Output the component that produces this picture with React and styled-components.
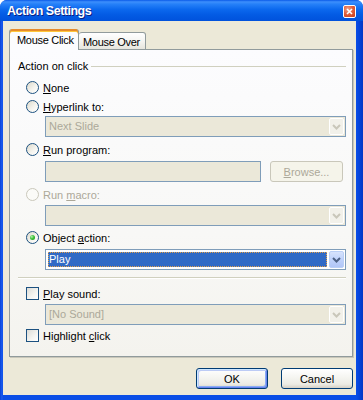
import React from "react";
import styled, { createGlobalStyle, css } from "styled-components";

const GlobalStyle = createGlobalStyle`
  html, body { margin: 0; padding: 0; background: #fff; }
  body { font-family: "Liberation Sans", Arial, sans-serif; font-size: 11px; }
`;

const font = `"Liberation Sans", Arial, sans-serif`;

const Window = styled.div`
  width: 363px;
  height: 400px;
  display: flex;
  flex-direction: column;
  background: linear-gradient(to right, #0842d6 0px, #1a5cf0 2px, #0a4ee6 3px, #0a4ee6 356px, #0648e0 358px, #0337c4 363px);
  border-radius: 7px 7px 0 0;
  overflow: hidden;
  font-family: ${font};
  font-size: 11px;
  color: #000;
`;

const TitleBar = styled.div`
  height: 21px;
  flex: none;
  display: flex;
  align-items: center;
  justify-content: space-between;
  padding: 1px 7px 0 7px;
  box-sizing: border-box;
  background: linear-gradient(to bottom, #0a5ae8 0%, #3d8ffc 9%, #2580f8 20%, #0b68ee 45%, #035be4 70%, #0052dc 100%);
`;

const Title = styled.span`
  color: #fff;
  font-weight: bold;
  font-size: 12.5px;
  letter-spacing: -0.5px;
  text-shadow: 1px 1px 0 #0a1e82;
`;

const CloseButton = styled.div`
  width: 11px;
  height: 11px;
  border: 1px solid #fff;
  border-radius: 2px;
  background: radial-gradient(circle at 35% 30%, #f0a48a 0%, #e2623f 45%, #c43a17 100%);
  display: flex;
  align-items: center;
  justify-content: center;
  margin-top: 1px;
`;

const Client = styled.div`
  flex: 1;
  margin: 0 7px 5px 3px;
  background: #ece9d8;
  padding: 8px 3px 0 6px;
  display: flex;
  flex-direction: column;
`;

const TabStrip = styled.div`
  display: flex;
  align-items: flex-end;
  height: 21px;
  margin-bottom: -1px;
  position: relative;
  z-index: 1;
`;

const Tab = styled.div`
  box-sizing: border-box;
  border: 1px solid #919b9c;
  border-radius: 3px 3px 0 0;
  display: flex;
  align-items: center;
  white-space: nowrap;
  letter-spacing: -0.3px;
  ${({ $active }) =>
    $active
      ? css`
          width: 70px;
          height: 21px;
          padding: 1px 0 0 7px;
          border-bottom: none;
          border-top: none;
          background: #fcfcfe;
          box-shadow: inset 0 2px 0 #e68b2c, inset 0 3px 0 #ffc73c;
        `
      : css`
          width: 67px;
          height: 18px;
          padding: 1px 0 0 4px;
          border-left: none;
          background: linear-gradient(to bottom, #ffffff 0%, #f5f5f2 50%, #e6e5dd 100%);
        `}
`;

const Panel = styled.div`
  height: 308px;
  box-sizing: border-box;
  border: 1px solid #919b9c;
  box-shadow: 1px 1px 0 #c9c7ba;
  background: linear-gradient(to bottom, #fcfcfe 0%, #f8f8f6 60%, #f4f3ee 100%);
  padding: 9px 6px 0 8px;
  display: flex;
  flex-direction: column;
`;

const GroupHeader = styled.div`
  display: flex;
  align-items: center;
  height: 13px;
  gap: 3px;
  &::after {
    content: "";
    flex: 1;
    height: 0;
    border-top: 1px solid #d0d0bf;
    margin-top: 1px;
  }
`;

const Option = styled.label`
  display: flex;
  align-items: center;
  height: 13px;
  gap: 4px;
  margin: ${({ $mt = 6 }) => `${$mt}px 0 0 8px`};
  color: ${({ $disabled }) => ($disabled ? "#aca899" : "#000")};
  white-space: nowrap;
`;

const Radio = styled.span`
  width: 13px;
  height: 13px;
  box-sizing: border-box;
  border-radius: 50%;
  flex: none;
  display: flex;
  align-items: center;
  justify-content: center;
  border: 1px solid ${({ $disabled }) => ($disabled ? "#cac8bb" : "#1c5180")};
  background: ${({ $disabled }) =>
    $disabled ? "#fbfbf8" : "linear-gradient(135deg, #dcd9cb 0%, #f6f5f0 60%, #ffffff 100%)"};
  &::after {
    content: "";
    display: ${({ $checked }) => ($checked ? "block" : "none")};
    width: 5px;
    height: 5px;
    border-radius: 50%;
    background: radial-gradient(circle at 35% 35%, #b8f0b0 0%, #3cc23a 45%, #1a8f1a 100%);
  }
`;

const Check = styled.span`
  width: 13px;
  height: 13px;
  box-sizing: border-box;
  flex: none;
  border: 1px solid #1c5180;
  background: linear-gradient(135deg, #dcdcd7 0%, #f5f5f1 60%, #ffffff 100%);
`;

const FieldRow = styled.div`
  display: flex;
  gap: 9px;
  margin: ${({ $mt = 4 }) => `${$mt}px 0 0 27px`};
`;

const SelectBox = styled.div`
  flex: 1;
  height: 21px;
  box-sizing: border-box;
  border: 1px solid #7f9db9;
  background: ${({ $active }) => ($active ? "#fff" : "#ebe8d9")};
  display: flex;
  align-items: center;
  padding: 0 1px 0 2px;
  color: #aca899;
`;

const SelectValue = styled.div`
  flex: 1;
  height: 15px;
  line-height: 15px;
  padding-left: 1px;
  box-sizing: border-box;
  ${({ $selected }) =>
    $selected &&
    css`
      background: #316ac5;
      color: #fff;
      outline: 1px dotted #e4a04a;
      outline-offset: -1px;
      margin-right: 2px;
    `}
`;

const DropButton = styled.div`
  width: 15px;
  height: 17px;
  box-sizing: border-box;
  border-radius: 2px;
  display: flex;
  align-items: center;
  justify-content: center;
  ${({ $active }) =>
    $active
      ? css`
          border: 1px solid #bacff6;
          background: linear-gradient(to bottom, #d7e3fc 0%, #c1d3fb 45%, #b1c6f7 100%);
          color: #4d6185;
        `
      : css`
          border: 1px solid #fff;
          background: #f2f1ea;
          color: #c9c7ba;
        `}
`;

const TextBox = styled.div`
  width: 216px;
  height: 21px;
  box-sizing: border-box;
  border: 1px solid #7f9db9;
  background: #ebe8d9;
`;

const SmallButton = styled.div`
  width: 73px;
  height: 21px;
  box-sizing: border-box;
  border: 1px solid #c9c7ba;
  border-radius: 3px;
  background: #f5f4ea;
  color: #aca899;
  display: flex;
  align-items: center;
  justify-content: center;
`;

const Separator = styled.div`
  margin-top: 7px;
  height: 0;
  border-top: 1px solid #d0d0bf;
  border-bottom: 1px solid #ffffff;
`;

const Footer = styled.div`
  display: flex;
  justify-content: flex-end;
  gap: 13px;
  margin-top: 11px;
`;

const Button = styled.div`
  width: 72px;
  height: 21px;
  box-sizing: border-box;
  border: 1px solid #003c74;
  border-radius: 3px;
  background: linear-gradient(to bottom, #ffffff 0%, #f6f6f2 40%, #ecebe4 80%, #d6d0c5 100%);
  display: flex;
  align-items: center;
  justify-content: center;
  ${({ $default }) =>
    $default &&
    css`
      box-shadow: inset 1px 1px 0 #cee7ff, inset -1px -1px 0 #6982ee, inset 2px 2px 0 #bccbf5,
        inset -2px -2px 0 #89adf4;
    `}
`;

const Chevron = () => (
  <svg width="9" height="6" viewBox="0 0 9 6">
    <polyline points="1,1 4.5,4.5 8,1" fill="none" stroke="currentColor" strokeWidth="2" />
  </svg>
);

const Select = ({ value, active, selected }) => (
  <SelectBox $active={active}>
    <SelectValue $selected={selected}>{value}</SelectValue>
    <DropButton $active={active}>
      <Chevron />
    </DropButton>
  </SelectBox>
);

export default function App() {
  return (
    <>
      <GlobalStyle />
      <Window>
        <TitleBar>
          <Title>Action Settings</Title>
          <CloseButton>
            <svg width="7" height="7" viewBox="0 0 7 7">
              <path d="M1 1 L6 6 M6 1 L1 6" stroke="#fff" strokeWidth="1.6" />
            </svg>
          </CloseButton>
        </TitleBar>
        <Client>
          <TabStrip>
            <Tab $active>Mouse Click</Tab>
            <Tab>Mouse Over</Tab>
          </TabStrip>
          <Panel>
            <GroupHeader>Action on click</GroupHeader>
            <Option $mt={9}>
              <Radio />
              <span><u>N</u>one</span>
            </Option>
            <Option>
              <Radio />
              <span><u>H</u>yperlink to:</span>
            </Option>
            <FieldRow $mt={3}>
              <Select value="Next Slide" />
            </FieldRow>
            <Option>
              <Radio />
              <span><u>R</u>un program:</span>
            </Option>
            <FieldRow $mt={5}>
              <TextBox />
              <SmallButton><span><u>B</u>rowse...</span></SmallButton>
            </FieldRow>
            <Option $disabled>
              <Radio $disabled />
              <span>Run <u>m</u>acro:</span>
            </Option>
            <FieldRow>
              <Select value="" />
            </FieldRow>
            <Option $mt={5}>
              <Radio $checked />
              <span>Object <u>a</u>ction:</span>
            </Option>
            <FieldRow $mt={5}>
              <Select value="Play" active selected />
            </FieldRow>
            <Separator />
            <Option $mt={8}>
              <Check />
              <span><u>P</u>lay sound:</span>
            </Option>
            <FieldRow>
              <Select value="[No Sound]" />
            </FieldRow>
            <Option $mt={4}>
              <Check />
              <span>Highlight <u>c</u>lick</span>
            </Option>
          </Panel>
          <Footer>
            <Button $default>OK</Button>
            <Button>Cancel</Button>
          </Footer>
        </Client>
      </Window>
    </>
  );
}
